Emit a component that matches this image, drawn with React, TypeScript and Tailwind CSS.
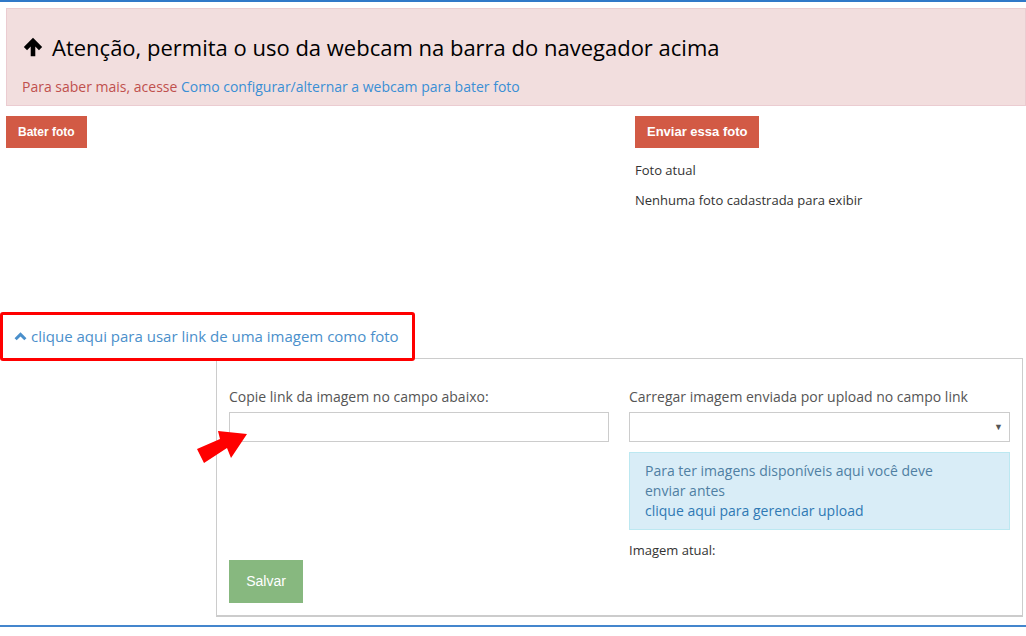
import React from 'react';

const font = { fontFamily: '"Open Sans", "Noto Sans", sans-serif' };

function UpArrow() {
  return (
    <svg width="22" height="22" viewBox="0 0 24 24" className="shrink-0">
      <path d="M12 2 L22 12 L18.5 15.5 L14.5 11.5 L14.5 22 L9.5 22 L9.5 11.5 L5.5 15.5 L2 12 Z" fill="#000" />
    </svg>
  );
}

function ChevronUp() {
  return (
    <svg width="13" height="11" viewBox="0 0 12 10" className="shrink-0">
      <path d="M6 1 L11.5 6.5 L9.5 8.5 L6 5 L2.5 8.5 L0.5 6.5 Z" fill="#4a8fcb" />
    </svg>
  );
}

function RedArrow() {
  return (
    <svg width="56" height="40" viewBox="0 0 56 40" className="absolute left-[-36px] top-[15px]">
      <polygon points="4,22 27,12 25,4 54,7 38,31 34,21 11,36" fill="#ff0000" />
    </svg>
  );
}

export default function App() {
  return (
    <div className="w-[1026px] h-[636px] bg-white text-[#333]" style={font}>
      <div className="border-t-2 border-[#3079c8]" />

      {/* webcam alert */}
      <div className="ml-[6px] mt-[6px] h-[98px] bg-[#f2dede] border border-[#ebccd1] px-[15px] pt-[23px]">
        <div className="flex items-center gap-[8px] h-[30px]">
          <UpArrow />
          <h2 className="text-[22px] text-black leading-[30px]">Atenção, permita o uso da webcam na barra do navegador acima</h2>
        </div>
        <p className="mt-[15px] text-[14px] leading-[20px] text-[#c0504d]">
          Para saber mais, acesse <a className="text-[#3a8fd5]">Como configurar/alternar a webcam para bater foto</a>
        </p>
      </div>

      {/* capture row */}
      <div className="flex mt-[10px] h-[196px]">
        <div className="w-[629px] pl-[6px]">
          <button className="h-[32px] px-[12px] bg-[#d25a45] text-white text-[12px] font-bold" style={{ fontFamily: '"Liberation Sans", Arial, sans-serif' }}>
            Bater foto
          </button>
        </div>
        <div className="pl-[6px]">
          <button className="h-[32px] px-[12px] bg-[#d25a45] text-white text-[13px] font-bold" style={{ fontFamily: '"Liberation Sans", Arial, sans-serif' }}>
            Enviar essa foto
          </button>
          <p className="mt-[12px] text-[13px] leading-[20px]">Foto atual</p>
          <p className="mt-[10px] text-[13px] leading-[20px]">Nenhuma foto cadastrada para exibir</p>
        </div>
      </div>

      {/* link toggle */}
      <div className="relative z-10 w-[415px] h-[49px] border-[3px] border-[#ff0000] rounded-[3px] bg-white flex items-center gap-[4px] pl-[11px]">
        <ChevronUp />
        <span className="text-[15px] text-[#4a8fcb]">clique aqui para usar link de uma imagem como foto</span>
      </div>

      {/* link form panel */}
      <div className="ml-[216px] mr-[3px] -mt-[3px] h-[259px] border border-b-2 border-[#cccccc] bg-white flex gap-[20px] px-[12px] pt-[28px]">
        <div className="w-[380px] flex flex-col">
          <label className="text-[14px] leading-[20px] text-[#555]">Copie link da imagem no campo abaixo:</label>
          <div className="relative mt-[5px]">
            <RedArrow />
            <input className="w-full h-[30px] border border-[#cccccc] outline-none" />
          </div>
          <button className="mt-[118px] w-[74px] h-[43px] bg-[#87b87f] text-white text-[14px]" style={{ fontFamily: '"Liberation Sans", Arial, sans-serif' }}>
            Salvar
          </button>
        </div>
        <div className="w-[381px] flex flex-col">
          <label className="text-[14px] leading-[20px] text-[#555]">Carregar imagem enviada por upload no campo link</label>
          <div className="mt-[5px] h-[30px] border border-[#cccccc] flex items-center justify-end pr-[6px]">
            <span className="text-[9px] text-[#555]">▼</span>
          </div>
          <div className="mt-[10px] h-[78px] bg-[#d9edf7] border border-[#bce8f1] px-[15px] pt-[8px] text-[14px] leading-[20px] text-[#4f7fa3]">
            <p>Para ter imagens disponíveis aqui você deve<br />enviar antes</p>
            <a className="text-[#2f79b4]">clique aqui para gerenciar upload</a>
          </div>
          <p className="mt-[10px] text-[13px] leading-[20px]">Imagem atual:</p>
        </div>
      </div>

      <div className="mt-[8px] border-t-2 border-[#3079c8] opacity-90" />
    </div>
  );
}
